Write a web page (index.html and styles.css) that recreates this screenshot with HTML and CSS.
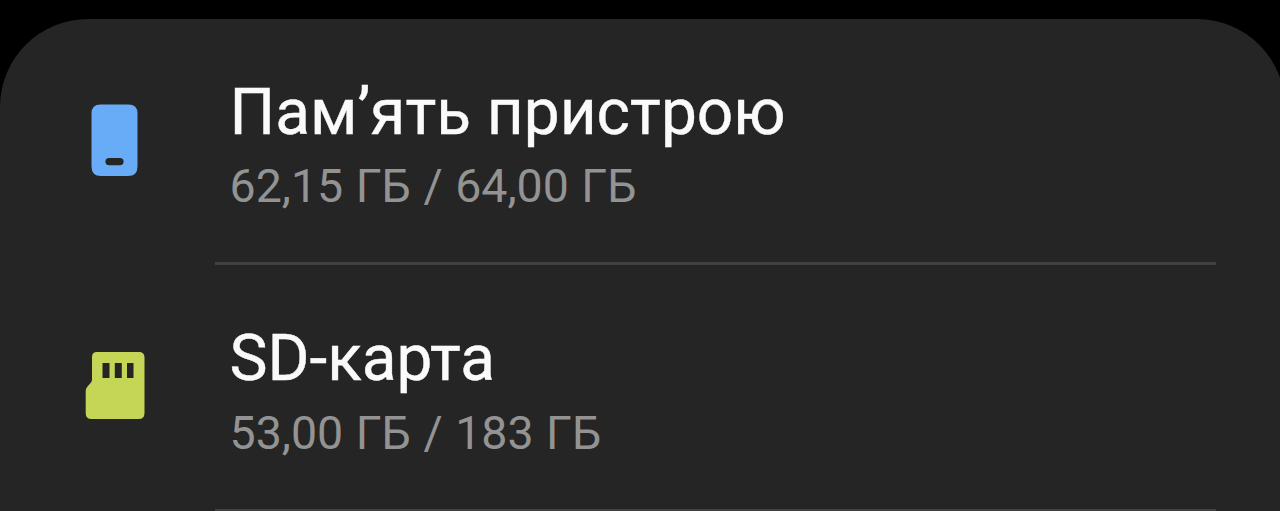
FILE: index.html
```html
<!DOCTYPE html>
<html lang="uk">
<head>
<meta charset="utf-8">
<title>Пам’ять</title>
<link rel="stylesheet" href="styles.css">
</head>
<body>
<main class="panel">
  <section class="row">
    <svg class="icon" viewBox="0 0 70 80"><path fill="#68abf6" fill-rule="evenodd" d="M20.500 3.500H48.500Q57.500 3.500 57.500 12.500V65.500Q57.500 75 48 75H21Q11.500 75 11.500 65.500V12.500Q11.500 3.500 20.500 3.500ZM29 57a3.600 3.600 0 0 0 0 7.200H40a3.600 3.600 0 0 0 0-7.200Z"/></svg>
    <div class="body">
      <h2 class="title">Пам’ять пристрою</h2>
      <p class="usage">62,15 ГБ / 64,00 ГБ</p>
    </div>
  </section>
  <section class="row">
    <svg class="icon" viewBox="0 0 70 80"><path fill="#c5d656" fill-rule="evenodd" d="M17 4H59Q64.500 4 64.500 9.500V65Q64.500 71 58.500 71H11.500Q5.700 71 5.700 65V43Q5.700 40.500 7.300 38.700L11 34.500Q12 33.300 12 31.500V9Q12 4 17 4ZM22.500 15V30H29.500V15ZM34.800 15V30H41.800V15ZM47 15V30H53.500V15Z"/></svg>
    <div class="body">
      <h2 class="title">SD-карта</h2>
      <p class="usage">53,00 ГБ / 183 ГБ</p>
    </div>
  </section>
</main>
</body>
</html>
```
FILE: styles.css
```css
* { box-sizing: border-box; }
body { margin: 0; background: #000; overflow: hidden; font-family: Roboto, "Noto Sans", sans-serif; padding-top: 18.5px; height: 511px; }
.panel { width: 1285px; height: 493px; background: #252525; border-radius: 88px 88px 0 0; overflow: hidden; }
.row { display: flex; height: 246.5px; padding-left: 80px; }
.icon { width: 70px; height: 80px; margin-top: 82.5px; flex: none; }
.body { width: 1001px; margin-left: 64.5px; padding: 56px 0 0 15px; border-bottom: 3px solid #414141; }
.title { margin: 0; font-size: 64px; line-height: 76px; font-weight: 400; color: #fafafa; -webkit-text-stroke: 0.4px #fafafa; white-space: nowrap; }
.usage { margin: 7.500px 0 0; font-size: 46.5px; line-height: 56px; word-spacing: 1px; color: #939393; white-space: nowrap; }
```
